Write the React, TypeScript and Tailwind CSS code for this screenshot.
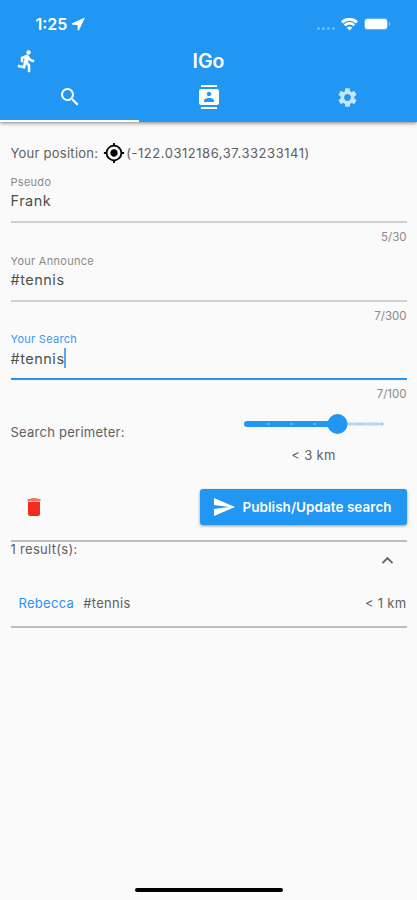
import React from 'react';
import { MdContacts, MdGpsFixed, MdKeyboardArrowUp, MdSearch, MdSend, MdSettings } from 'react-icons/md';

// --- Static data ---
const fields = [
  { id: 1, label: 'Pseudo', value: 'Frank', count: '5/30', active: false },
  { id: 2, label: 'Your Announce', value: '#tennis', count: '7/300', active: false },
  { id: 3, label: 'Your Search', value: '#tennis', count: '7/100', active: true },
];

const results = [{ id: 1, name: 'Rebecca', announce: '#tennis', distance: '< 1 km' }];

function StatusBar() {
  return (
    <div className="flex h-[48px] items-center pl-[35.5px] pr-[27px]">
      <span className="text-[16px] font-semibold leading-none">1:25</span>
      <svg className="ml-[4px]" width="15" height="14" viewBox="0 0 14 14" fill="currentColor">
        <path d="M13.5 0.5 L0.6 6.3 Q0 7.3 0.9 7.7 L6 7.9 L6.2 13 Q6.7 14 7.5 13.2 Z" />
      </svg>
      <div className="ml-auto flex items-center">
        <div className="mt-[9px] flex gap-[2px] opacity-35">
          <span className="size-[3px] rounded-full bg-white" />
          <span className="size-[3px] rounded-full bg-white" />
          <span className="size-[3px] rounded-full bg-white" />
          <span className="size-[3px] rounded-full bg-white" />
        </div>
        <svg className="ml-[6px]" width="17" height="13" viewBox="0 0 17 13" fill="none" stroke="currentColor">
          <path d="M1 4.3 C5.2 0.3 11.8 0.3 16 4.3" strokeWidth="3" />
          <path d="M3.7 7.3 C6.5 4.7 10.5 4.7 13.3 7.3" strokeWidth="2.5" />
          <path d="M8.5 12.6 L5.7 9.8 C7.4 8.2 9.6 8.2 11.3 9.8 Z" fill="currentColor" stroke="none" />
        </svg>
        <div className="ml-[6px] h-[12px] w-[24px] rounded-[4px] bg-white/30 p-px">
          <div className="h-full rounded-[2.5px] bg-white" />
        </div>
        <span className="ml-px h-[4px] w-[1.5px] rounded-r-full bg-white/50" />
      </div>
    </div>
  );
}

function RunIcon() {
  return (
    <svg className="ml-[15px]" width="24" height="24" viewBox="0 0 24 24" fill="currentColor">
      <path
        d="M13.49 5.48c1.1 0 2-.9 2-2s-.9-2-2-2-2 .9-2 2 .9 2 2 2zm-3.6 13.9l1-4.4 2.1 2v6h2v-7.5l-2.1-2 .6-3c1.3 1.5 3.3 2.5 5.5 2.5v-2c-1.9 0-3.5-1-4.3-2.4l-1-1.6c-.4-.6-1-1-1.7-1-.3 0-.5.1-.8.1l-5.2 2.2v4.7h2v-3.4l1.8-.7-1.6 8.1-4.9-1-.4 2 7 1.4z"
        stroke="currentColor"
        strokeWidth="0.5"
      />
    </svg>
  );
}

function Header() {
  return (
    <header className="h-[122px] bg-[#2196f3] text-white shadow-[0_1px_4px_rgba(0,0,0,0.5)]">
      <StatusBar />
      <div className="grid h-[26px] grid-cols-3 items-center">
        <RunIcon />
        <h1 className="mt-[2px] text-center text-[19.5px] font-semibold leading-none">IGo</h1>
      </div>
      <nav className="grid h-[48px] grid-cols-3">
        <div className="flex items-center justify-center border-b-2 border-white">
          <MdSearch className="size-[24px]" />
        </div>
        <div className="flex items-center justify-center">
          <MdContacts className="mb-[3px] size-[24px]" />
        </div>
        <div className="flex items-center justify-center text-white/75">
          <MdSettings className="mb-[1px] size-[23px]" />
        </div>
      </nav>
    </header>
  );
}

type FieldProps = { label: string; value: string; count: string; active: boolean };

function Field({ label, value, count, active }: FieldProps) {
  return (
    <div className="h-[78.7px]">
      <div
        className={`h-[14px] text-[11px] leading-[14px] tracking-[0.28px] ${
          active ? 'text-[#3b96f3]' : 'text-[#8a8a8a]'
        }`}
      >
        {label}
      </div>
      <div className="mt-[2px] flex h-[20px] items-center text-[14.5px] tracking-[0.5px] text-[#505050]">
        {value}
        {active && <span className="-ml-px h-[20px] w-[2px] bg-[#55a9f3]" />}
      </div>
      <div className={`mt-[10px] h-[2px] ${active ? 'bg-[#2196f3]' : 'bg-[#d0d0d0]'}`} />
      <div className="mt-[7px] text-right text-[11.5px] leading-[14px] text-[#8a8a8a]">{count}</div>
    </div>
  );
}

function PerimeterSlider() {
  return (
    <div className="mr-[23px] flex w-[140px] flex-col items-center">
      <svg width="140" height="20" viewBox="0 0 140 20">
        <rect x="90" y="8.5" width="50" height="3" rx="1.5" fill="#b5daf8" />
        <rect x="0" y="7" width="96" height="6" rx="3" fill="#2196f3" />
        <circle cx="24.5" cy="10" r="1" fill="#8ac8fa" />
        <circle cx="47.5" cy="10" r="1" fill="#8ac8fa" />
        <circle cx="70.5" cy="10" r="1" fill="#8ac8fa" />
        <circle cx="116" cy="10" r="1" fill="#80bff3" />
        <circle cx="138" cy="10" r="1" fill="#80bff3" />
        <circle cx="93.5" cy="10" r="10" fill="#2196f3" />
      </svg>
      <div className="mt-[12px] text-[13px] leading-[18px] tracking-[0.3px]">&lt; 3 km</div>
    </div>
  );
}

export default function App() {
  return (
    <div className="flex h-[900px] w-[417px] flex-col bg-[#fafafa] font-['Inter','Liberation_Sans',sans-serif] text-[#606060]">
      <Header />

      <main className="px-[10.5px] pt-[19px]">
        <div className="flex h-[24px] items-center text-[13px] tracking-[0.25px]">
          <span className="mt-px">Your position:</span>
          <MdGpsFixed className="ml-[5px] size-[22px] text-black" />
          <span className="ml-px mt-px tracking-[0.53px]">(-122.0312186,37.33233141)</span>
        </div>

        <div className="mt-[10px]">
          {fields.map((field) => (
            <Field key={field.id} {...field} />
          ))}
        </div>

        {/* Search perimeter */}
        <div className="mt-[3px] flex h-[51px] items-start justify-between">
          <span className="mt-[9px] text-[13px] leading-[18px] tracking-[0.25px]">Search perimeter:</span>
          <PerimeterSlider />
        </div>

        {/* Actions */}
        <div className="mt-[24px] flex h-[36px] items-center justify-between">
          <button className="ml-[11px]">
            <svg width="24" height="24" viewBox="0 0 24 24">
              <path d="M6 7h12v12c0 1.1-.9 2-2 2H8c-1.1 0-2-.9-2-2z" fill="#f22c1e" />
              <path d="M8.5 4l1-1h5l1 1H18.5v2.5h-13V4z" fill="#f77268" />
            </svg>
          </button>
          <button className="flex h-[36px] w-[207px] items-center rounded-[3px] bg-[#2196f3] pl-[12px] text-white shadow-[0_1px_3px_rgba(0,0,0,0.4)]">
            <MdSend className="size-[24px]" />
            <span className="ml-[7px] text-[13.5px] font-semibold tracking-[0.04px]">Publish/Update search</span>
          </button>
        </div>

        {/* Results */}
        <section className="mt-[15px] h-[88px] border-y-2 border-[#bdbdbd]">
          <div className="flex h-[37px] justify-between text-[13px] tracking-[0.3px]">
            <span className="leading-[14px]">1 result(s):</span>
            <MdKeyboardArrowUp className="mr-[8px] mt-[7px] size-[23px] text-[#666]" />
          </div>
          {results.map((result) => (
            <div key={result.id} className="mt-[15px] flex h-[20px] items-center pl-[8px] text-[13px] tracking-[0.3px]">
              <span className="text-[#2f92f0]">{result.name}</span>
              <span className="ml-[9px]">{result.announce}</span>
              <span className="ml-auto">{result.distance}</span>
            </div>
          ))}
        </section>
      </main>

      {/* Home indicator */}
      <div className="mx-auto mb-[8px] mt-auto h-[4px] w-[148px] rounded-full bg-black" />
    </div>
  );
}
